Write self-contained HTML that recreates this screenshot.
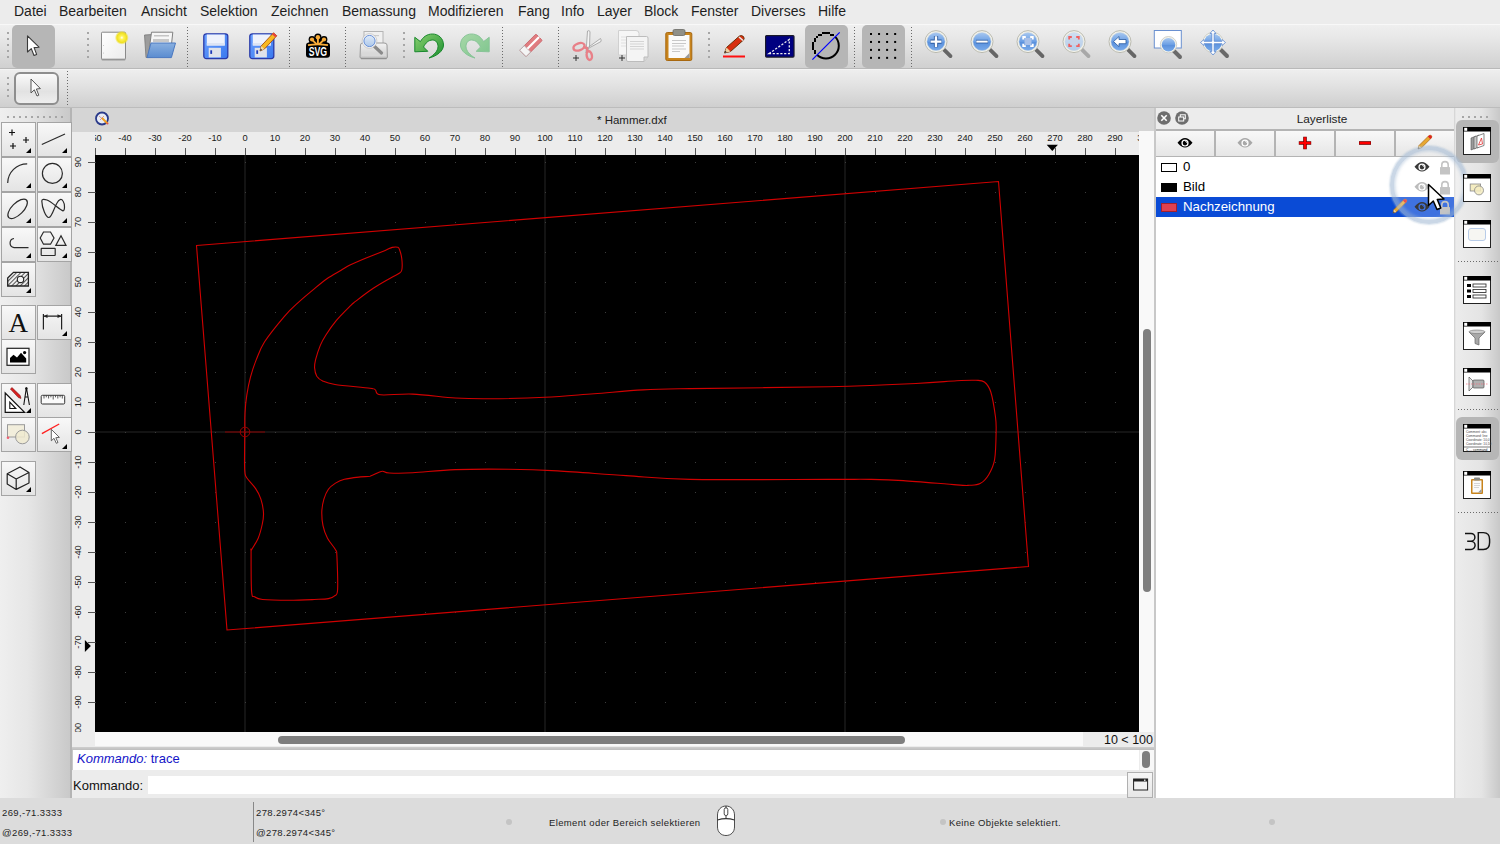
<!DOCTYPE html><html><head><meta charset="utf-8"><style>

*{box-sizing:border-box;margin:0;padding:0}
html,body{width:1500px;height:844px;overflow:hidden;background:#ececec;font-family:"Liberation Sans",sans-serif}
body{position:relative}
.abs{position:absolute}
.menu span{position:absolute;top:3px;font-size:14px;color:#1e1e1e;white-space:nowrap}
.tb{position:absolute}
.hd{position:absolute;width:2px;background:repeating-linear-gradient(#a6a6a6 0 2px,transparent 2px 6px)}
.hh{position:absolute;height:2px;background:repeating-linear-gradient(90deg,#a6a6a6 0 2px,transparent 2px 6px)}
.fd{position:absolute;width:1px;background:repeating-linear-gradient(#6a6a6a 0 1px,transparent 1px 3px)}
.fdh{position:absolute;height:1px;background:repeating-linear-gradient(90deg,#6a6a6a 0 1px,transparent 1px 3px)}
.sel{position:absolute;background:#b6b6b6;border-radius:5px}
.ico{position:absolute;overflow:visible}
.tbtn{position:absolute;border:1px solid #a4a4a4;background:linear-gradient(#f8f8f8,#e4e4e4)}
.rl{position:absolute;font-size:9.3px;font-weight:500;color:#1a1a1a;white-space:nowrap;line-height:12px}
.st{position:absolute;font-size:9.5px;color:#1e1e1e;white-space:nowrap;letter-spacing:0.36px;line-height:12px}

</style></head><body>
<div class="abs menu" style="left:0;top:0;width:1500px;height:24px;background:#ececec">
<span style="left:14px">Datei</span>
<span style="left:59px">Bearbeiten</span>
<span style="left:141px">Ansicht</span>
<span style="left:200px">Selektion</span>
<span style="left:271px">Zeichnen</span>
<span style="left:342px">Bemassung</span>
<span style="left:428px">Modifizieren</span>
<span style="left:518px">Fang</span>
<span style="left:561px">Info</span>
<span style="left:597px">Layer</span>
<span style="left:644px">Block</span>
<span style="left:691px">Fenster</span>
<span style="left:751px">Diverses</span>
<span style="left:818px">Hilfe</span>
</div>
<div class="tb" style="left:0;top:24px;width:1500px;height:45px;background:linear-gradient(#efefef,#e6e6e6 35%,#d0d0d0);border-top:1px solid #f8f8f8;border-bottom:1px solid #b9b9b9"></div>
<div class="tb" style="left:0;top:69px;width:1500px;height:39px;background:linear-gradient(#eeeeee,#e4e4e4 35%,#cfcfcf);border-top:1px solid #f4f4f4;border-bottom:1px solid #bcbcbc"></div>
<div class="hd" style="left:7px;top:32px;height:26px"></div>
<div class="hd" style="left:87px;top:32px;height:26px"></div>
<div class="hd" style="left:403px;top:32px;height:26px"></div>
<div class="hd" style="left:708px;top:32px;height:26px"></div>
<div class="fd" style="left:187px;top:27px;height:40px"></div>
<div class="fd" style="left:289px;top:27px;height:40px"></div>
<div class="fd" style="left:345px;top:27px;height:40px"></div>
<div class="fd" style="left:502px;top:27px;height:40px"></div>
<div class="fd" style="left:558px;top:27px;height:40px"></div>
<div class="fd" style="left:854px;top:27px;height:40px"></div>
<div class="fd" style="left:911px;top:27px;height:40px"></div>
<div class="sel" style="left:12px;top:25px;width:43px;height:43px"></div>
<div class="sel" style="left:805px;top:25px;width:43px;height:43px"></div>
<div class="sel" style="left:862px;top:25px;width:43px;height:43px"></div>
<div class="hd" style="left:7px;top:77px;height:20px"></div>
<div class="tbtn" style="left:14px;top:72px;width:45px;height:33px;border:2px solid #8e8e8e;border-radius:6px;background:linear-gradient(#fafafa,#e2e2e2 60%,#eeeeee)"></div>
<div class="fd" style="left:67px;top:71px;height:35px"></div>
<svg width="0" height="0" style="position:absolute"><defs>
<linearGradient id="gPage" x1="0" y1="0" x2="1" y2="1"><stop offset="0" stop-color="#ffffff"/><stop offset="1" stop-color="#ececec"/></linearGradient>
<radialGradient id="gGlow"><stop offset="0" stop-color="#ffffff"/><stop offset="0.25" stop-color="#fff45a"/><stop offset="0.7" stop-color="#f0e020"/><stop offset="1" stop-color="#f0e020" stop-opacity="0"/></radialGradient>
<linearGradient id="gBlueF" x1="0" y1="0" x2="0" y2="1"><stop offset="0" stop-color="#8ab0e0"/><stop offset="1" stop-color="#5a8cd0"/></linearGradient>
<linearGradient id="gFloppy" x1="0" y1="0" x2="1" y2="1"><stop offset="0" stop-color="#6aa0ff"/><stop offset="1" stop-color="#3a78ee"/></linearGradient>
<linearGradient id="gGreen" x1="0" y1="0" x2="1" y2="1"><stop offset="0" stop-color="#8ad070"/><stop offset="1" stop-color="#1c9030"/></linearGradient>
<linearGradient id="gGreenL" x1="0" y1="0" x2="1" y2="1"><stop offset="0" stop-color="#a8d8a8"/><stop offset="1" stop-color="#7cc48c"/></linearGradient>
<linearGradient id="gMag" x1="0" y1="0" x2="0" y2="1"><stop offset="0" stop-color="#a8c8f0"/><stop offset="0.5" stop-color="#6a9ee4"/><stop offset="0.52" stop-color="#5a90dc"/><stop offset="1" stop-color="#78aaea"/></linearGradient>
<linearGradient id="gMagL" x1="0" y1="0" x2="0" y2="1"><stop offset="0" stop-color="#d0dff2"/><stop offset="1" stop-color="#b4cce8"/></linearGradient>
<linearGradient id="gMagP" x1="0" y1="0" x2="0" y2="1"><stop offset="0" stop-color="#e4eefa"/><stop offset="1" stop-color="#a8c4e8"/></linearGradient>
<linearGradient id="gPrinter" x1="0" y1="0" x2="0" y2="1"><stop offset="0" stop-color="#f4f4f4"/><stop offset="1" stop-color="#c8c8c8"/></linearGradient>
</defs></svg>
<svg class="ico" style="left:27px;top:35px" width="14" height="22" viewBox="0 0 14 22" ><path d="M0.5,0.8 L0.5,17 L4.3,13.6 L7,20.5 L9.6,19.4 L7.1,12.6 L12,12.2 Z" fill="#fff" stroke="#3a3a3a" stroke-width="1.1" stroke-linejoin="round"/></svg>
<svg class="ico" style="left:30px;top:78px" width="12" height="20" viewBox="0 0 12 20" ><path d="M1,1 L1,15 L4.3,11.8 L7,18 L8.8,17.2 L6.4,11 L10.4,10.6 Z" fill="#fafafa" stroke="#555" stroke-width="1" stroke-linejoin="round"/></svg>
<svg class="ico" style="left:100px;top:31px" width="30" height="32" viewBox="0 0 30 32" ><rect x="1.5" y="1.5" width="24" height="28" rx="1" fill="#9a9a9a"/><rect x="1.5" y="1.2" width="24" height="27" rx="1" fill="url(#gPage)" stroke="#8a8a8a" stroke-width="1"/><circle cx="3.5" cy="14.5" r="0.5" fill="#bbb"/><circle cx="3.5" cy="22" r="0.5" fill="#bbb"/><circle cx="21.8" cy="6.7" r="7" fill="url(#gGlow)"/></svg>
<svg class="ico" style="left:143px;top:31px" width="36" height="30" viewBox="0 0 36 30" ><path d="M1.5,4 L9,3.5 L9.5,26 L3,26.5 Z" fill="#9c9c9c" stroke="#777" stroke-width="0.8"/><path d="M8.5,1.2 L29.8,1.2 L28,18 L6,20 Z" fill="#f6f6f6" stroke="#808080" stroke-width="1"/><rect x="11" y="4" width="15" height="1.5" fill="#c4c4c4"/><rect x="10" y="8" width="16" height="3" fill="#c8c8c8"/><path d="M8,12 L32.5,12 L28.4,26.6 L4,26.6 Z" fill="url(#gBlueF)" stroke="#4a78c0" stroke-width="1"/></svg>
<svg class="ico" style="left:203px;top:33px" width="27" height="27" viewBox="0 0 27 27" ><rect x="0.8" y="0.8" width="24" height="24.8" rx="2.5" fill="url(#gFloppy)" stroke="#2a3aa8" stroke-width="1.3"/><rect x="3.8" y="1.5" width="18" height="11" fill="#eef2fc"/><rect x="3.8" y="10" width="18" height="2.5" fill="#dde4f4"/><rect x="5.7" y="14.8" width="12.2" height="9.6" fill="#dfe2ea"/><rect x="7.3" y="17.3" width="1.8" height="3.6" fill="#1e3ab8"/></svg>
<svg class="ico" style="left:249px;top:33px" width="27" height="27" viewBox="0 0 27 27" ><rect x="0.8" y="0.8" width="24" height="24.8" rx="2.5" fill="url(#gFloppy)" stroke="#2a3aa8" stroke-width="1.3"/><rect x="3.8" y="1.5" width="18" height="11" fill="#eef2fc"/><rect x="3.8" y="10" width="18" height="2.5" fill="#dde4f4"/><rect x="5.7" y="14.8" width="12.2" height="9.6" fill="#dfe2ea"/><rect x="7.3" y="17.3" width="1.8" height="3.6" fill="#1e3ab8"/></svg>
<svg class="ico" style="left:258px;top:31px" width="20" height="22" viewBox="0 0 20 22" ><path d="M2,20 L3.2,15 L15.5,1.8 L18.8,4.8 L6.4,18 Z" fill="#f8b820" stroke="#a85010" stroke-width="0.9" stroke-linejoin="round"/><path d="M15.5,1.8 L18.8,4.8 L17.3,6.3 L14,3.3 Z" fill="#e84040"/><path d="M2,20 L3.2,15 L6.4,18 Z" fill="#f0d8a8"/><path d="M2,20 L2.6,17.5 L4.2,19 Z" fill="#333"/></svg>
<svg class="ico" style="left:305px;top:33px" width="26" height="26" viewBox="0 0 26 26" ><rect x="1" y="9.6" width="24" height="15.2" rx="3.2" fill="#000"/><g fill="#000"><circle cx="12.9" cy="4.2" r="3.6"/><circle cx="7" cy="6.5" r="3.4"/><circle cx="19" cy="6.5" r="3.4"/><path d="M3.5,10 L7,6.5 L12.9,4 L19,6.5 L22.5,10 Z"/></g><g fill="#f8ac38"><circle cx="12.9" cy="4.2" r="2.2"/><circle cx="7" cy="6.5" r="2.1"/><circle cx="19" cy="6.5" r="2.1"/></g><path d="M12.9,4.5 L12.9,11.5 M7.2,6.8 L11.5,11.2 M18.8,6.8 L14.3,11.2" stroke="#f8ac38" stroke-width="1.9"/><path d="M3,12.2 Q12.9,10.4 23,12.2" stroke="#f8ac38" stroke-width="1.7" fill="none"/><text x="12.9" y="23.4" text-anchor="middle" font-family="Liberation Sans" font-weight="bold" font-size="12.8" fill="#fff" textLength="18.4" lengthAdjust="spacingAndGlyphs">SVG</text></svg>
<svg class="ico" style="left:359px;top:30px" width="31" height="31" viewBox="0 0 31 31" ><rect x="5" y="1.5" width="19" height="14" fill="#f0f0f0" stroke="#b4b4b4"/><rect x="8" y="5" width="12" height="1.2" fill="#ccc"/><path d="M1.5,15 Q1.5,13 4,13 L25,13 Q28,13 28,15 L28.4,27 Q28.4,28.5 26.5,28.5 L3,28.5 Q1,28.5 1,27 Z" fill="url(#gPrinter)" stroke="#9a9a9a"/><rect x="3" y="23" width="24" height="3" fill="#d8d8d8"/><path d="M2,28.5 L27.5,28.5" stroke="#909090" stroke-width="1.5"/><path d="M15,16 L22.5,23" stroke="#8a8a8a" stroke-width="3.2" stroke-linecap="round"/><circle cx="10.5" cy="11" r="6.4" fill="url(#gMagP)" stroke="#f4f4f4" stroke-width="1.6"/><circle cx="10.5" cy="11" r="5.6" fill="none" stroke="#4a7ad0" stroke-width="0.8"/><circle cx="10.5" cy="11" r="7.4" fill="none" stroke="#b8b8b8" stroke-width="0.6"/></svg>
<svg class="ico" style="left:413px;top:33px" width="32" height="27" viewBox="0 0 32 27" ><path d="M16,25 C24,23 30.5,18 30.5,12 C30.5,5 25,1 19.5,1 C14,1 10,4 7.4,8.6 L1.8,4.3 L1.8,18.8 L14.8,18.3 L10.5,14 C12.5,10 15.5,7 19.5,7 C23,7 25,10 25,13.5 C25,18 21,22 16,25 Z" fill="url(#gGreen)" stroke="#18882c" stroke-width="1" stroke-linejoin="round"/></svg>
<svg class="ico" style="left:459px;top:33px" width="32" height="27" viewBox="0 0 32 27" ><path d="M16,25 C8,23 1.5,18 1.5,12 C1.5,5 7,1 12.5,1 C18,1 22,4 24.6,8.6 L30.2,4.3 L30.2,18.8 L17.2,18.3 L21.5,14 C19.5,10 16.5,7 12.5,7 C9,7 7,10 7,13.5 C7,18 11,22 16,25 Z" fill="url(#gGreenL)" stroke="#88c498" stroke-width="1" stroke-linejoin="round"/></svg>
<svg class="ico" style="left:516px;top:31px" width="30" height="30" viewBox="0 0 30 30" ><ellipse cx="14" cy="26" rx="10" ry="1.6" fill="#d8d8d8"/><g transform="rotate(-45 15 15)"><rect x="4" y="10" width="23" height="9" rx="1" fill="#e07c80" stroke="#c86066" stroke-width="0.8"/><rect x="4" y="10" width="6.5" height="9" fill="#f4f4f4" stroke="#b0b0b0" stroke-width="0.8"/><rect x="10.5" y="13.3" width="16.5" height="2.2" fill="#fff"/></g></svg>
<svg class="ico" style="left:571px;top:29px" width="32" height="33" viewBox="0 0 32 33" ><path d="M15,24 L16.5,2 Q18,1 19,2.5 L18.5,18 Z" fill="#f4f4f4" stroke="#9a9a9a" stroke-width="0.8"/><path d="M15,20 L29.5,9.5 Q30.5,11 30,12.5 L18,19 Z" fill="#f4f4f4" stroke="#9a9a9a" stroke-width="0.8"/><ellipse cx="8" cy="17.8" rx="5.8" ry="3.5" transform="rotate(-20 8 17.8)" fill="none" stroke="#e88088" stroke-width="2.4"/><ellipse cx="18.3" cy="26.6" rx="2.6" ry="4.4" transform="rotate(-10 18.3 26.6)" fill="none" stroke="#e88088" stroke-width="2.4"/><path d="M12,18 L16,19 L16.5,23" fill="none" stroke="#e88088" stroke-width="2.4"/><path d="M2,29 L8,29 M5,26 L5,32" stroke="#333" stroke-width="1"/></svg>
<svg class="ico" style="left:617px;top:29px" width="33" height="34" viewBox="0 0 33 34" ><path d="M1.5,1.5 L19,1.5 Q22,1.5 22,4.5 L22,26 L1.5,26 Z" fill="#f6f6f6" stroke="#d0d0d0"/><g stroke="#e0e0e0" stroke-width="1"><path d="M4,8 L10,8 M4,11 L10,11 M4,14 L10,14 M4,17 L10,17"/></g><path d="M9.5,7.5 L29.5,7.5 Q31,7.5 31,9 L31,28 L27,32.5 L11,32.5 Q9.5,32.5 9.5,31 Z" fill="#f4f4f4" stroke="#bcbcbc"/><path d="M31,28 L27,28 L27,32.5" fill="#d8d8d8" stroke="#bcbcbc"/><g stroke="#d4d4d4" stroke-width="1"><path d="M13,12.5 L27,12.5 M13,15 L27,15 M13,17.5 L27,17.5 M13,20 L27,20"/></g><path d="M2,29 L8,29 M5,26 L5,32" stroke="#333" stroke-width="1"/></svg>
<svg class="ico" style="left:664px;top:28px" width="30" height="35" viewBox="0 0 30 35" ><rect x="1.8" y="4.5" width="26" height="28" rx="1.5" fill="#c8841c" stroke="#a86810"/><rect x="4.5" y="7" width="21" height="23" fill="#fafafa"/><path d="M20.5,30 L25.5,25 L25.5,30 Z" fill="#9a9a9a"/><g stroke="#c8c8c8"><path d="M8,12.5 L22,12.5 M8,15.5 L22,15.5 M8,18 L20,18 M8,21 L22,21 M8,23.5 L16,23.5"/></g><rect x="9" y="1.5" width="12" height="6" rx="1.5" fill="#909088" stroke="#6a6a64" stroke-width="0.8"/></svg>
<svg class="ico" style="left:722px;top:34px" width="26" height="26" viewBox="0 0 26 26" ><path d="M1,22.5 L23,22.5" stroke="#ff1010" stroke-width="2"/><path d="M2.5,19 L4.5,13.5 L17.5,2 Q19.5,0.8 21.5,2.6 Q22.8,4.5 21.5,6 L8.5,17.5 Z" fill="#d83010" stroke="#6a3008" stroke-width="1" stroke-linejoin="round"/><path d="M17,3 L21,6.5" stroke="#e8e8e8" stroke-width="1.6"/><path d="M2.5,19 L4.5,13.5 L8.5,17.5 Z" fill="#f0d0a0"/><path d="M2.5,19 L3.2,16.8 L4.8,18.2 Z" fill="#222"/></svg>
<svg class="ico" style="left:765px;top:35px" width="30" height="23" viewBox="0 0 30 23" ><rect x="0.6" y="0.6" width="28.4" height="21.5" rx="1" fill="#000080" stroke="#1a1a2a" stroke-width="1.2"/><path d="M4,18.6 L24.3,4.5 L24.3,18.6 Z" fill="none" stroke="#f0f0f0" stroke-width="1.3" stroke-dasharray="2.2 1.6"/></svg>
<svg class="ico" style="left:806px;top:28px" width="40" height="36" viewBox="0 0 40 36" ><g fill="#000" shape-rendering="crispEdges"><rect x="16" y="4" width="8" height="2"/><rect x="12" y="6" width="4" height="2"/><rect x="24" y="6" width="4" height="2"/><rect x="10" y="8" width="2" height="2"/><rect x="8" y="10" width="2" height="4"/><rect x="6" y="14" width="2" height="8"/><rect x="8" y="22" width="2" height="4"/></g><path d="M10.95,26.75 A12.8,12.8 0 0 0 29.05,26.75 A12.8,12.8 0 0 0 29.05,8.65" fill="none" stroke="#000" stroke-width="2"/><path d="M6.4,31.6 L33.7,4.3" stroke="#0000ff" stroke-width="1.2"/></svg>
<svg class="ico" style="left:870px;top:33px" width="28" height="28" viewBox="0 0 28 28" ><rect x="0.00" y="0.00" width="2" height="2" fill="#000"/><rect x="0.00" y="7.95" width="2" height="2" fill="#000"/><rect x="0.00" y="15.90" width="2" height="2" fill="#000"/><rect x="0.00" y="23.85" width="2" height="2" fill="#000"/><rect x="8.05" y="0.00" width="2" height="2" fill="#000"/><rect x="8.05" y="7.95" width="2" height="2" fill="#000"/><rect x="8.05" y="15.90" width="2" height="2" fill="#000"/><rect x="8.05" y="23.85" width="2" height="2" fill="#000"/><rect x="16.10" y="0.00" width="2" height="2" fill="#000"/><rect x="16.10" y="7.95" width="2" height="2" fill="#000"/><rect x="16.10" y="15.90" width="2" height="2" fill="#000"/><rect x="16.10" y="23.85" width="2" height="2" fill="#000"/><rect x="24.15" y="0.00" width="2" height="2" fill="#000"/><rect x="24.15" y="7.95" width="2" height="2" fill="#000"/><rect x="24.15" y="15.90" width="2" height="2" fill="#000"/><rect x="24.15" y="23.85" width="2" height="2" fill="#000"/></svg>
<svg class="ico" style="left:923px;top:28px" width="32" height="34" viewBox="0 0 32 34" ><path d="M21,21.6 L27.5,28.1" stroke="#666" stroke-width="3.8" stroke-linecap="round"/><circle cx="13" cy="13.6" r="11" fill="#f2f2ea" stroke="#b4b4aa" stroke-width="0.9"/><circle cx="13" cy="13.6" r="9.1" fill="url(#gMag)" stroke="#c8d4e0" stroke-width="0.5"/><path d="M13,8 L13,19.2 M7.4,13.6 L18.6,13.6" stroke="#2a5aa0" stroke-width="4.2"/><path d="M13,8.2 L13,19 M7.6,13.6 L18.4,13.6" stroke="#fff" stroke-width="2.4"/></svg>
<svg class="ico" style="left:969px;top:28px" width="32" height="34" viewBox="0 0 32 34" ><path d="M21,21.6 L27.5,28.1" stroke="#666" stroke-width="3.8" stroke-linecap="round"/><circle cx="13" cy="13.6" r="11" fill="#f2f2ea" stroke="#b4b4aa" stroke-width="0.9"/><circle cx="13" cy="13.6" r="9.1" fill="url(#gMag)" stroke="#c8d4e0" stroke-width="0.5"/><path d="M7,13.6 L19,13.6" stroke="#2a5aa0" stroke-width="3.6"/><path d="M7.3,13.6 L18.7,13.6" stroke="#fff" stroke-width="2"/></svg>
<svg class="ico" style="left:1015px;top:28px" width="32" height="34" viewBox="0 0 32 34" ><path d="M21,21.6 L27.5,28.1" stroke="#666" stroke-width="3.8" stroke-linecap="round"/><circle cx="13" cy="13.6" r="11" fill="#f2f2ea" stroke="#b4b4aa" stroke-width="0.9"/><circle cx="13" cy="13.6" r="9.1" fill="url(#gMag)" stroke="#c8d4e0" stroke-width="0.5"/><rect x="9.5" y="10" width="7" height="7" fill="#a8c0e8"/><path d="M8.2,11.5 L8.2,9 L10.8,9 M15.2,9 L17.8,9 L17.8,11.5 M17.8,15.7 L17.8,18.2 L15.2,18.2 M10.8,18.2 L8.2,18.2 L8.2,15.7" fill="none" stroke="#fff" stroke-width="1.8"/></svg>
<svg class="ico" style="left:1061px;top:28px" width="32" height="34" viewBox="0 0 32 34" ><path d="M21,21.6 L27.5,28.1" stroke="#a8a8a8" stroke-width="3.8" stroke-linecap="round"/><circle cx="13" cy="13.6" r="11" fill="#f2f2ea" stroke="#b4b4aa" stroke-width="0.9"/><circle cx="13" cy="13.6" r="9.1" fill="url(#gMagL)" stroke="#c8d4e0" stroke-width="0.5"/><rect x="9.5" y="10" width="7" height="7" fill="#c8d4e8"/><path d="M8.2,11.5 L8.2,9 L10.8,9 M15.2,9 L17.8,9 L17.8,11.5 M17.8,15.7 L17.8,18.2 L15.2,18.2 M10.8,18.2 L8.2,18.2 L8.2,15.7" fill="none" stroke="#f06060" stroke-width="1.8"/></svg>
<svg class="ico" style="left:1107px;top:28px" width="32" height="34" viewBox="0 0 32 34" ><path d="M21,21.6 L27.5,28.1" stroke="#666" stroke-width="3.8" stroke-linecap="round"/><circle cx="13" cy="13.6" r="11" fill="#f2f2ea" stroke="#b4b4aa" stroke-width="0.9"/><circle cx="13" cy="13.6" r="9.1" fill="url(#gMag)" stroke="#c8d4e0" stroke-width="0.5"/><path d="M6.5,13.6 L12,8.5 L12,11.5 L19,11.5 L19,15.7 L12,15.7 L12,18.7 Z" fill="#fff" stroke="#2a5aa0" stroke-width="0.8"/></svg>
<svg class="ico" style="left:1153px;top:30px" width="32" height="32" viewBox="0 0 32 32" ><rect x="1.3" y="0.5" width="27" height="17.5" fill="#fff" stroke="#6a90d0" stroke-width="1"/><path d="M21,21 L27,27" stroke="#6a6a6a" stroke-width="4" stroke-linecap="round"/><circle cx="15.5" cy="14.7" r="8.2" fill="#f4f4ec" stroke="#c8c8c0" stroke-width="0.8"/><circle cx="15.5" cy="14.7" r="6.8" fill="url(#gMag)"/></svg>
<svg class="ico" style="left:1199px;top:28px" width="34" height="34" viewBox="0 0 34 34" ><path d="M22,22 L28,28" stroke="#6a6a6a" stroke-width="4" stroke-linecap="round"/><circle cx="14" cy="14.5" r="10.2" fill="#f4f4ec" stroke="#c8c8c0" stroke-width="0.8"/><circle cx="14" cy="14.5" r="8.8" fill="url(#gMag)"/><path d="M14,2 L17,5.5 L15.2,5.5 L15.2,13.3 L23,13.3 L23,11.5 L26.5,14.5 L23,17.5 L23,15.7 L15.2,15.7 L15.2,23.5 L17,23.5 L14,27 L11,23.5 L12.8,23.5 L12.8,15.7 L5,15.7 L5,17.5 L1.5,14.5 L5,11.5 L5,13.3 L12.8,13.3 L12.8,5.5 L11,5.5 Z" fill="#fff" stroke="#5a88d0" stroke-width="0.8"/></svg>
<div class="abs" style="left:0;top:108px;width:70px;height:690px;background:linear-gradient(90deg,#efefef,#e6e6e6 40%,#c9c9c9)"></div>
<div class="abs" style="left:70px;top:108px;width:2px;height:690px;background:#b4b4b4"></div>
<div class="hh" style="left:7px;top:116px;width:57px"></div>
<div class="tbtn" style="left:1px;top:122px;width:35px;height:35px"></div>
<div class="tbtn" style="left:37px;top:122px;width:35px;height:35px"></div>
<div class="tbtn" style="left:1px;top:157px;width:35px;height:35px"></div>
<div class="tbtn" style="left:37px;top:157px;width:35px;height:35px"></div>
<div class="tbtn" style="left:1px;top:192px;width:35px;height:35px"></div>
<div class="tbtn" style="left:37px;top:192px;width:35px;height:35px"></div>
<div class="tbtn" style="left:1px;top:227px;width:35px;height:35px"></div>
<div class="tbtn" style="left:37px;top:227px;width:35px;height:35px"></div>
<div class="tbtn" style="left:1px;top:262px;width:35px;height:35px"></div>
<div class="tbtn" style="left:1px;top:305px;width:35px;height:35px"></div>
<div class="tbtn" style="left:37px;top:305px;width:35px;height:35px"></div>
<div class="tbtn" style="left:1px;top:339px;width:35px;height:35px"></div>
<div class="tbtn" style="left:1px;top:383px;width:35px;height:35px"></div>
<div class="tbtn" style="left:37px;top:383px;width:35px;height:35px"></div>
<div class="tbtn" style="left:1px;top:417px;width:35px;height:35px"></div>
<div class="tbtn" style="left:37px;top:417px;width:35px;height:35px"></div>
<div class="tbtn" style="left:1px;top:461px;width:35px;height:35px"></div>
<div class="abs" style="left:72px;top:108px;width:1082px;height:24px;background:#d5d5d5"></div>
<div class="abs" style="left:597px;top:113px;font-size:11.5px;color:#222;line-height:14px;white-space:nowrap">* Hammer.dxf</div>
<div class="abs" style="left:72px;top:132px;width:1082px;height:23px;background:#ececec"></div>
<div class="abs" style="left:72px;top:155px;width:23px;height:591px;background:#ececec"></div>
<div class="abs" style="left:95px;top:155px;width:1044px;height:577px;background:#000"></div>
<div class="abs" style="left:95px;top:732px;width:988px;height:14px;background:#f9f9f9"></div>
<div class="abs" style="left:278px;top:736px;width:627px;height:8px;background:#7e7e7e;border-radius:4px"></div>
<div class="abs" style="left:1083px;top:732px;width:71px;height:14px;background:#ececec"></div>
<div class="abs" style="left:1083px;top:733px;width:70px;text-align:right;font-size:12.5px;color:#111;line-height:14px">10 &lt; 100</div>
<div class="abs" style="left:1139px;top:131px;width:15px;height:601px;background:#f9f9f9"></div>
<div class="abs" style="left:1143px;top:329px;width:8px;height:263px;background:#7e7e7e;border-radius:4px"></div>
<div class="abs" style="left:72px;top:747px;width:1082px;height:3px;background:linear-gradient(#cfcfcf,#bdbdbd)"></div>
<div class="abs" style="left:72px;top:750px;width:1082px;height:21px;background:#fff;border-left:1px solid #c8c8c8;border-bottom:1px solid #c0c0c0"></div>
<div class="abs" style="left:77px;top:751px;font-size:13px;color:#1414c8;line-height:15px;white-space:nowrap"><i>Kommando:</i> trace</div>
<div class="abs" style="left:1139px;top:750px;width:15px;height:20px;background:#f8f8f8;border-left:1px solid #ececec"></div>
<div class="abs" style="left:1142px;top:751px;width:8px;height:17px;background:#7e7e7e;border-radius:4px"></div>
<div class="abs" style="left:72px;top:770px;width:1082px;height:28px;background:#ececec"></div>
<div class="abs" style="left:73px;top:778px;font-size:13px;color:#111;line-height:15px">Kommando:</div>
<div class="abs" style="left:148px;top:776px;width:979px;height:18px;background:#fff"></div>
<div class="tbtn" style="left:1127px;top:772px;width:26px;height:26px;border-color:#b0b0b0;background:linear-gradient(#f6f6f6,#e6e6e6)"></div>
<svg class="ico" style="left:95px;top:155px" width="1044" height="577" viewBox="0 0 1044 577" ><defs><pattern id="gd" x="0" y="7" width="30" height="30" patternUnits="userSpaceOnUse"><rect x="0" y="0" width="1" height="1" fill="#3c3c3c"/></pattern></defs><rect x="149" y="0" width="2" height="577" fill="#131313"/><rect x="449" y="0" width="2" height="577" fill="#131313"/><rect x="749" y="0" width="2" height="577" fill="#131313"/><rect x="0" y="276" width="1044" height="2" fill="#131313"/><rect x="0" y="0" width="1044" height="577" fill="url(#gd)"/><polygon points="101.5,90.5 903.5,26.5 933.5,411.5 132.0,475.0" fill="none" stroke="#d00000" stroke-width="1.1"/><path d="M149.8,273.3 C149.8,270.8 149.7,263.5 150.0,258.0 C150.3,252.5 150.9,246.1 151.8,240.2 C152.7,234.3 153.8,228.3 155.4,222.4 C157.0,216.5 158.9,210.5 161.3,204.6 C163.7,198.7 165.0,194.0 169.6,186.8 C174.3,179.6 183.6,168.2 189.2,161.6 C194.8,155.0 198.6,151.8 203.4,147.4 C208.1,143.0 212.9,139.1 217.7,135.1 C222.4,131.2 227.2,127.0 231.9,123.7 C236.6,120.4 242.3,117.5 246.1,115.2 C250.0,112.9 250.6,112.1 255.0,110.0 C259.4,107.9 266.5,104.9 272.4,102.5 C278.3,100.1 286.0,97.1 290.2,95.4 C294.4,93.7 295.2,92.9 297.3,92.4 C299.4,91.9 301.4,91.9 302.6,92.2 C303.8,92.5 303.7,92.3 304.4,94.2 C305.1,96.1 306.4,100.2 306.8,103.7 C307.2,107.2 307.3,112.5 306.8,115.0 C306.3,117.5 305.6,117.2 303.8,118.5 C302.0,119.8 300.4,120.2 296.1,122.7 C291.9,125.2 284.2,129.4 278.3,133.3 C272.4,137.2 264.4,143.4 260.5,146.4 C256.6,149.4 258.2,148.0 255.0,151.2 C251.8,154.4 245.4,160.6 241.4,165.4 C237.4,170.2 233.6,175.8 230.9,180.0 C228.2,184.2 227.0,186.3 225.3,190.4 C223.6,194.5 221.6,200.9 220.6,204.6 C219.7,208.4 219.4,210.1 219.6,212.9 C219.8,215.7 220.5,219.0 221.8,221.2 C223.2,223.4 224.7,224.6 227.7,226.0 C230.7,227.4 232.1,228.3 240.0,229.5 C247.9,230.7 268.3,232.3 275.0,233.2 C281.7,234.1 278.5,233.8 280.3,234.9 C282.1,236.0 279.5,239.1 285.7,239.8 C291.9,240.5 305.3,238.6 317.7,239.1 C330.1,239.6 347.9,242.2 360.3,243.0 C372.7,243.8 377.4,243.9 392.3,243.8 C407.2,243.7 432.2,243.2 450.0,242.3 C467.8,241.5 482.7,239.9 499.0,238.7 C515.3,237.5 532.0,235.7 548.0,234.9 C564.0,234.0 564.0,234.1 595.0,233.6 C626.0,233.1 696.0,232.5 733.7,231.7 C771.4,230.8 799.7,229.5 821.0,228.5 C842.3,227.5 851.7,226.2 861.7,225.7 C871.7,225.2 876.3,225.1 880.9,225.3 C885.5,225.5 886.9,225.1 889.4,227.0 C891.9,228.9 893.9,231.2 895.8,237.0 C897.6,242.8 899.6,255.3 900.5,262.0 C901.4,268.7 901.2,269.9 901.1,277.0 C901.0,284.1 900.8,297.6 899.6,304.7 C898.4,311.8 896.1,315.7 893.7,319.7 C891.3,323.7 888.3,326.8 885.1,328.6 C881.9,330.4 878.4,330.1 874.5,330.3 C870.6,330.5 872.7,330.7 861.7,329.9 C850.7,329.1 822.5,326.5 808.3,325.6 C794.1,324.7 788.7,324.6 776.3,324.4 C763.9,324.2 763.9,324.4 733.7,324.4 C703.5,324.4 628.8,325.0 595.0,324.4 C561.2,323.8 553.0,322.0 531.0,320.6 C508.9,319.2 482.3,317.0 462.7,315.9 C443.2,314.8 430.8,314.4 413.7,314.2 C396.6,314.0 376.3,314.0 360.3,314.6 C344.3,315.2 328.7,317.2 317.7,317.8 C306.7,318.4 299.2,318.2 294.2,318.0 C289.2,317.8 289.6,316.4 287.8,316.3 C286.0,316.2 285.6,316.6 283.5,317.4 C281.4,318.2 278.0,320.4 275.0,321.2 C272.0,321.9 269.7,321.4 265.4,321.9 C261.1,322.4 253.5,323.2 249.4,324.2 C245.2,325.2 243.2,326.4 240.5,328.1 C237.8,329.8 235.3,331.6 233.4,334.3 C231.5,337.0 230.0,340.4 228.9,344.1 C227.8,347.8 227.0,352.1 226.8,356.5 C226.7,360.9 227.1,366.3 228.0,370.7 C228.9,375.2 230.4,379.2 232.5,383.2 C234.6,387.2 238.9,391.8 240.5,394.7 C242.1,397.7 241.5,394.2 241.9,400.9 C242.2,407.6 243.0,428.0 242.6,434.7 C242.2,441.4 241.1,439.4 239.6,440.9 C238.1,442.4 236.8,443.0 233.4,443.6 C230.0,444.2 225.7,444.2 219.2,444.5 C212.7,444.8 202.9,445.3 194.3,445.3 C185.7,445.3 173.4,445.1 167.6,444.5 C161.8,443.9 161.5,443.1 159.7,441.8 C157.9,440.5 157.2,443.9 156.6,436.5 C156.0,429.1 156.1,404.4 156.1,397.4 C156.1,390.4 155.4,397.1 156.6,394.7 C157.8,392.3 161.4,387.5 163.2,383.2 C165.0,378.9 166.4,373.2 167.3,369.0 C168.2,364.8 168.7,362.4 168.5,358.3 C168.3,354.1 167.2,348.2 165.9,344.1 C164.6,340.0 162.9,336.9 160.5,333.4 C158.1,329.8 153.5,325.5 151.7,322.8 C149.9,320.1 150.3,320.4 149.9,317.4 C149.5,314.4 149.5,312.4 149.5,305.0 C149.5,297.6 149.8,278.6 149.8,273.3" fill="none" stroke="#d00000" stroke-width="1.1"/><line x1="130" y1="277" x2="170" y2="277" stroke="#8a0000" stroke-width="1.2"/><circle cx="150" cy="277" r="4.8" fill="none" stroke="#9a0000" stroke-width="1"/></svg>
<div class="abs" style="left:95px;top:132px;width:1044px;height:23px;overflow:hidden">
<div class="abs" style="left:0px;top:16px;width:1px;height:7px;background:#555"></div>
<div class="rl" style="left:-30px;top:0px;width:60px;text-align:center">-50</div>
<div class="abs" style="left:30px;top:16px;width:1px;height:7px;background:#555"></div>
<div class="rl" style="left:0px;top:0px;width:60px;text-align:center">-40</div>
<div class="abs" style="left:60px;top:16px;width:1px;height:7px;background:#555"></div>
<div class="rl" style="left:30px;top:0px;width:60px;text-align:center">-30</div>
<div class="abs" style="left:90px;top:16px;width:1px;height:7px;background:#555"></div>
<div class="rl" style="left:60px;top:0px;width:60px;text-align:center">-20</div>
<div class="abs" style="left:120px;top:16px;width:1px;height:7px;background:#555"></div>
<div class="rl" style="left:90px;top:0px;width:60px;text-align:center">-10</div>
<div class="abs" style="left:150px;top:16px;width:1px;height:7px;background:#555"></div>
<div class="rl" style="left:120px;top:0px;width:60px;text-align:center">0</div>
<div class="abs" style="left:180px;top:16px;width:1px;height:7px;background:#555"></div>
<div class="rl" style="left:150px;top:0px;width:60px;text-align:center">10</div>
<div class="abs" style="left:210px;top:16px;width:1px;height:7px;background:#555"></div>
<div class="rl" style="left:180px;top:0px;width:60px;text-align:center">20</div>
<div class="abs" style="left:240px;top:16px;width:1px;height:7px;background:#555"></div>
<div class="rl" style="left:210px;top:0px;width:60px;text-align:center">30</div>
<div class="abs" style="left:270px;top:16px;width:1px;height:7px;background:#555"></div>
<div class="rl" style="left:240px;top:0px;width:60px;text-align:center">40</div>
<div class="abs" style="left:300px;top:16px;width:1px;height:7px;background:#555"></div>
<div class="rl" style="left:270px;top:0px;width:60px;text-align:center">50</div>
<div class="abs" style="left:330px;top:16px;width:1px;height:7px;background:#555"></div>
<div class="rl" style="left:300px;top:0px;width:60px;text-align:center">60</div>
<div class="abs" style="left:360px;top:16px;width:1px;height:7px;background:#555"></div>
<div class="rl" style="left:330px;top:0px;width:60px;text-align:center">70</div>
<div class="abs" style="left:390px;top:16px;width:1px;height:7px;background:#555"></div>
<div class="rl" style="left:360px;top:0px;width:60px;text-align:center">80</div>
<div class="abs" style="left:420px;top:16px;width:1px;height:7px;background:#555"></div>
<div class="rl" style="left:390px;top:0px;width:60px;text-align:center">90</div>
<div class="abs" style="left:450px;top:16px;width:1px;height:7px;background:#555"></div>
<div class="rl" style="left:420px;top:0px;width:60px;text-align:center">100</div>
<div class="abs" style="left:480px;top:16px;width:1px;height:7px;background:#555"></div>
<div class="rl" style="left:450px;top:0px;width:60px;text-align:center">110</div>
<div class="abs" style="left:510px;top:16px;width:1px;height:7px;background:#555"></div>
<div class="rl" style="left:480px;top:0px;width:60px;text-align:center">120</div>
<div class="abs" style="left:540px;top:16px;width:1px;height:7px;background:#555"></div>
<div class="rl" style="left:510px;top:0px;width:60px;text-align:center">130</div>
<div class="abs" style="left:570px;top:16px;width:1px;height:7px;background:#555"></div>
<div class="rl" style="left:540px;top:0px;width:60px;text-align:center">140</div>
<div class="abs" style="left:600px;top:16px;width:1px;height:7px;background:#555"></div>
<div class="rl" style="left:570px;top:0px;width:60px;text-align:center">150</div>
<div class="abs" style="left:630px;top:16px;width:1px;height:7px;background:#555"></div>
<div class="rl" style="left:600px;top:0px;width:60px;text-align:center">160</div>
<div class="abs" style="left:660px;top:16px;width:1px;height:7px;background:#555"></div>
<div class="rl" style="left:630px;top:0px;width:60px;text-align:center">170</div>
<div class="abs" style="left:690px;top:16px;width:1px;height:7px;background:#555"></div>
<div class="rl" style="left:660px;top:0px;width:60px;text-align:center">180</div>
<div class="abs" style="left:720px;top:16px;width:1px;height:7px;background:#555"></div>
<div class="rl" style="left:690px;top:0px;width:60px;text-align:center">190</div>
<div class="abs" style="left:750px;top:16px;width:1px;height:7px;background:#555"></div>
<div class="rl" style="left:720px;top:0px;width:60px;text-align:center">200</div>
<div class="abs" style="left:780px;top:16px;width:1px;height:7px;background:#555"></div>
<div class="rl" style="left:750px;top:0px;width:60px;text-align:center">210</div>
<div class="abs" style="left:810px;top:16px;width:1px;height:7px;background:#555"></div>
<div class="rl" style="left:780px;top:0px;width:60px;text-align:center">220</div>
<div class="abs" style="left:840px;top:16px;width:1px;height:7px;background:#555"></div>
<div class="rl" style="left:810px;top:0px;width:60px;text-align:center">230</div>
<div class="abs" style="left:870px;top:16px;width:1px;height:7px;background:#555"></div>
<div class="rl" style="left:840px;top:0px;width:60px;text-align:center">240</div>
<div class="abs" style="left:900px;top:16px;width:1px;height:7px;background:#555"></div>
<div class="rl" style="left:870px;top:0px;width:60px;text-align:center">250</div>
<div class="abs" style="left:930px;top:16px;width:1px;height:7px;background:#555"></div>
<div class="rl" style="left:900px;top:0px;width:60px;text-align:center">260</div>
<div class="abs" style="left:960px;top:16px;width:1px;height:7px;background:#555"></div>
<div class="rl" style="left:930px;top:0px;width:60px;text-align:center">270</div>
<div class="abs" style="left:990px;top:16px;width:1px;height:7px;background:#555"></div>
<div class="rl" style="left:960px;top:0px;width:60px;text-align:center">280</div>
<div class="abs" style="left:1020px;top:16px;width:1px;height:7px;background:#555"></div>
<div class="rl" style="left:990px;top:0px;width:60px;text-align:center">290</div>
<div class="rl" style="left:1020px;top:0px;width:60px;text-align:center">300</div>
</div>
<div class="abs" style="left:0;top:0;width:1500px;height:732px;overflow:hidden">
<div class="abs" style="left:88px;top:732px;width:7px;height:1px;background:#555"></div>
<div class="rl" style="left:48px;top:726px;width:60px;text-align:center;transform:rotate(-90deg)">-100</div>
<div class="abs" style="left:88px;top:702px;width:7px;height:1px;background:#555"></div>
<div class="rl" style="left:48px;top:696px;width:60px;text-align:center;transform:rotate(-90deg)">-90</div>
<div class="abs" style="left:88px;top:672px;width:7px;height:1px;background:#555"></div>
<div class="rl" style="left:48px;top:666px;width:60px;text-align:center;transform:rotate(-90deg)">-80</div>
<div class="abs" style="left:88px;top:642px;width:7px;height:1px;background:#555"></div>
<div class="rl" style="left:48px;top:636px;width:60px;text-align:center;transform:rotate(-90deg)">-70</div>
<div class="abs" style="left:88px;top:612px;width:7px;height:1px;background:#555"></div>
<div class="rl" style="left:48px;top:606px;width:60px;text-align:center;transform:rotate(-90deg)">-60</div>
<div class="abs" style="left:88px;top:582px;width:7px;height:1px;background:#555"></div>
<div class="rl" style="left:48px;top:576px;width:60px;text-align:center;transform:rotate(-90deg)">-50</div>
<div class="abs" style="left:88px;top:552px;width:7px;height:1px;background:#555"></div>
<div class="rl" style="left:48px;top:546px;width:60px;text-align:center;transform:rotate(-90deg)">-40</div>
<div class="abs" style="left:88px;top:522px;width:7px;height:1px;background:#555"></div>
<div class="rl" style="left:48px;top:516px;width:60px;text-align:center;transform:rotate(-90deg)">-30</div>
<div class="abs" style="left:88px;top:492px;width:7px;height:1px;background:#555"></div>
<div class="rl" style="left:48px;top:486px;width:60px;text-align:center;transform:rotate(-90deg)">-20</div>
<div class="abs" style="left:88px;top:462px;width:7px;height:1px;background:#555"></div>
<div class="rl" style="left:48px;top:456px;width:60px;text-align:center;transform:rotate(-90deg)">-10</div>
<div class="abs" style="left:88px;top:432px;width:7px;height:1px;background:#555"></div>
<div class="rl" style="left:48px;top:426px;width:60px;text-align:center;transform:rotate(-90deg)">0</div>
<div class="abs" style="left:88px;top:402px;width:7px;height:1px;background:#555"></div>
<div class="rl" style="left:48px;top:396px;width:60px;text-align:center;transform:rotate(-90deg)">10</div>
<div class="abs" style="left:88px;top:372px;width:7px;height:1px;background:#555"></div>
<div class="rl" style="left:48px;top:366px;width:60px;text-align:center;transform:rotate(-90deg)">20</div>
<div class="abs" style="left:88px;top:342px;width:7px;height:1px;background:#555"></div>
<div class="rl" style="left:48px;top:336px;width:60px;text-align:center;transform:rotate(-90deg)">30</div>
<div class="abs" style="left:88px;top:312px;width:7px;height:1px;background:#555"></div>
<div class="rl" style="left:48px;top:306px;width:60px;text-align:center;transform:rotate(-90deg)">40</div>
<div class="abs" style="left:88px;top:282px;width:7px;height:1px;background:#555"></div>
<div class="rl" style="left:48px;top:276px;width:60px;text-align:center;transform:rotate(-90deg)">50</div>
<div class="abs" style="left:88px;top:252px;width:7px;height:1px;background:#555"></div>
<div class="rl" style="left:48px;top:246px;width:60px;text-align:center;transform:rotate(-90deg)">60</div>
<div class="abs" style="left:88px;top:222px;width:7px;height:1px;background:#555"></div>
<div class="rl" style="left:48px;top:216px;width:60px;text-align:center;transform:rotate(-90deg)">70</div>
<div class="abs" style="left:88px;top:192px;width:7px;height:1px;background:#555"></div>
<div class="rl" style="left:48px;top:186px;width:60px;text-align:center;transform:rotate(-90deg)">80</div>
<div class="abs" style="left:88px;top:162px;width:7px;height:1px;background:#555"></div>
<div class="rl" style="left:48px;top:156px;width:60px;text-align:center;transform:rotate(-90deg)">90</div>
</div>
<svg class="ico" style="left:1046px;top:144px" width="13" height="8" viewBox="0 0 13 8" ><path d="M0.7,0.8 L11.9,0.8 L6.3,7 Z" fill="#000"/></svg>
<svg class="ico" style="left:84px;top:639px" width="8" height="14" viewBox="0 0 8 14" ><path d="M0.9,1 L6.9,7 L0.9,13 Z" fill="#000"/></svg>
<div class="abs" style="left:72px;top:132px;width:23px;height:23px;background:#ececec"></div>
<div class="abs" style="left:1154px;top:108px;width:2px;height:690px;background:#c8c8c8"></div>
<div class="abs" style="left:1156px;top:108px;width:298px;height:22px;background:#ececec"></div>
<div class="abs" style="left:1156px;top:112px;width:332px;text-align:center;font-size:11.8px;color:#222;line-height:14px">Layerliste</div>
<div class="abs" style="left:1156px;top:129px;width:298px;height:28px;background:#b4b4b4"></div>
<div class="abs" style="left:1156px;top:131px;width:58px;height:25px;background:linear-gradient(#f8f8f8,#e6e6e6)"></div>
<div class="abs" style="left:1216px;top:131px;width:58px;height:25px;background:linear-gradient(#f8f8f8,#e6e6e6)"></div>
<div class="abs" style="left:1276px;top:131px;width:58px;height:25px;background:linear-gradient(#f8f8f8,#e6e6e6)"></div>
<div class="abs" style="left:1336px;top:131px;width:58px;height:25px;background:linear-gradient(#f8f8f8,#e6e6e6)"></div>
<div class="abs" style="left:1396px;top:131px;width:58px;height:25px;background:linear-gradient(#f8f8f8,#e6e6e6)"></div>
<div class="abs" style="left:1156px;top:157px;width:298px;height:641px;background:#fff"></div>
<div class="abs" style="left:1156px;top:197px;width:298px;height:20px;background:#0a4bd6"></div>
<div class="abs" style="left:1161px;top:163px;width:16px;height:9px;background:#fff;border:1px solid #000"></div>
<div class="abs" style="left:1183px;top:159px;font-size:13.3px;color:#000;line-height:16px">0</div>
<div class="abs" style="left:1161px;top:183px;width:16px;height:9px;background:#000;border:1px solid #000"></div>
<div class="abs" style="left:1183px;top:179px;font-size:13.3px;color:#000;line-height:16px">Bild</div>
<div class="abs" style="left:1161px;top:203px;width:16px;height:9px;background:#e04050;border:1px solid #a02030"></div>
<div class="abs" style="left:1183px;top:199px;font-size:13.3px;color:#fff;line-height:16px">Nachzeichnung</div>
<div class="abs" style="left:1454px;top:108px;width:46px;height:690px;background:linear-gradient(90deg,#d0d0d0 0,#ececec 2px,#e4e4e4 60%,#c8c8c8)"></div>
<div class="sel" style="left:1456px;top:120px;width:43px;height:43px;border-radius:6px"></div>
<div class="sel" style="left:1456px;top:417px;width:43px;height:43px;border-radius:6px"></div>
<div class="hh" style="left:1462px;top:116px;width:26px"></div>
<div class="fdh" style="left:1458px;top:261px;width:40px"></div>
<div class="fdh" style="left:1458px;top:409px;width:40px"></div>
<div class="fdh" style="left:1458px;top:512px;width:40px"></div>
<div class="abs" style="left:0;top:798px;width:1500px;height:46px;background:#dcdcdc"></div>
<div class="st" style="left:2px;top:806.7px">269,-71.3333</div>
<div class="st" style="left:2px;top:827.3px">@269,-71.3333</div>
<div class="abs" style="left:253px;top:802px;width:1px;height:40px;background:#888"></div>
<div class="st" style="left:256px;top:806.7px">278.2974&lt;345°</div>
<div class="st" style="left:256px;top:827.3px">@278.2974&lt;345°</div>
<div class="abs" style="left:506px;top:819px;width:6px;height:6px;border-radius:3px;background:#c4c4c4"></div>
<div class="abs" style="left:940px;top:819px;width:6px;height:6px;border-radius:3px;background:#c4c4c4"></div>
<div class="abs" style="left:1269px;top:819px;width:6px;height:6px;border-radius:3px;background:#c4c4c4"></div>
<div class="st" style="left:549px;top:816.8px">Element oder Bereich selektieren</div>
<div class="st" style="left:949px;top:816.8px">Keine Objekte selektiert.</div>
<svg class="ico" style="left:1px;top:122px" width="35" height="35" viewBox="0 0 35 35" ><path d="M8,10.5 L14,10.5 M11,7.5 L11,13.5 M22,18 L28,18 M25,15 L25,21 M9,24 L15,24 M12,21 L12,27" stroke="#111" stroke-width="1.2"/></svg>
<svg class="ico" style="left:26px;top:148px" width="6" height="6" viewBox="0 0 6 6" ><path d="M5,0 L5,5 L0,5 Z" fill="#000"/></svg>
<svg class="ico" style="left:36px;top:122px" width="35" height="35" viewBox="0 0 35 35" ><path d="M5.8,22.5 L29,12" stroke="#2a2a2a" fill="none" stroke-width="1.2"/></svg>
<svg class="ico" style="left:62px;top:148px" width="6" height="6" viewBox="0 0 6 6" ><path d="M5,0 L5,5 L0,5 Z" fill="#000"/></svg>
<svg class="ico" style="left:1px;top:157px" width="35" height="35" viewBox="0 0 35 35" ><path d="M6.7,26 A19.5,19.5 0 0 1 26.2,6.8" stroke="#2a2a2a" fill="none" stroke-width="1.2"/></svg>
<svg class="ico" style="left:26px;top:183px" width="6" height="6" viewBox="0 0 6 6" ><path d="M5,0 L5,5 L0,5 Z" fill="#000"/></svg>
<svg class="ico" style="left:36px;top:157px" width="35" height="35" viewBox="0 0 35 35" ><circle cx="16.4" cy="16.4" r="10" stroke="#2a2a2a" fill="none" stroke-width="1.2"/></svg>
<svg class="ico" style="left:62px;top:183px" width="6" height="6" viewBox="0 0 6 6" ><path d="M5,0 L5,5 L0,5 Z" fill="#000"/></svg>
<svg class="ico" style="left:1px;top:192px" width="35" height="35" viewBox="0 0 35 35" ><ellipse cx="16.6" cy="16.8" rx="12.5" ry="5.8" transform="rotate(-45 16.6 16.8)" stroke="#2a2a2a" fill="none" stroke-width="1.2"/></svg>
<svg class="ico" style="left:26px;top:218px" width="6" height="6" viewBox="0 0 6 6" ><path d="M5,0 L5,5 L0,5 Z" fill="#000"/></svg>
<svg class="ico" style="left:36px;top:192px" width="35" height="35" viewBox="0 0 35 35" ><path d="M5.8,9 C6,16 10,26 13,25.5 C16,25 18,16 21,11 C23,7 25.5,6.5 27,9 C29,12 29,19 27,18.8 C24,18 16,10 11,8 C8,7 5.8,7 5.8,9 Z" stroke="#2a2a2a" fill="none" stroke-width="1.2"/></svg>
<svg class="ico" style="left:62px;top:218px" width="6" height="6" viewBox="0 0 6 6" ><path d="M5,0 L5,5 L0,5 Z" fill="#000"/></svg>
<svg class="ico" style="left:1px;top:227px" width="35" height="35" viewBox="0 0 35 35" ><path d="M13,11.5 A4.6,4.6 0 0 0 13,20.6 L27.5,20.6" stroke="#2a2a2a" fill="none" stroke-width="1.2"/></svg>
<svg class="ico" style="left:26px;top:253px" width="6" height="6" viewBox="0 0 6 6" ><path d="M5,0 L5,5 L0,5 Z" fill="#000"/></svg>
<svg class="ico" style="left:36px;top:227px" width="35" height="35" viewBox="0 0 35 35" ><path d="M4.2,11 L7.5,5 L14.5,5 L18,11 L14.5,17.2 L7.5,17.2 Z M25,8.8 L30,18.4 L19.8,18.4 Z" stroke="#2a2a2a" fill="none" stroke-width="1.2"/><rect x="5.2" y="21.3" width="14" height="7.2" rx="0.5" stroke="#2a2a2a" fill="none" stroke-width="1.2"/></svg>
<svg class="ico" style="left:62px;top:253px" width="6" height="6" viewBox="0 0 6 6" ><path d="M5,0 L5,5 L0,5 Z" fill="#000"/></svg>
<svg class="ico" style="left:1px;top:262px" width="35" height="35" viewBox="0 0 35 35" ><defs><pattern id="hp" width="3" height="3" patternUnits="userSpaceOnUse" patternTransform="rotate(45)"><rect width="1" height="3" fill="#555"/></pattern></defs><path d="M6.7,16 L12.5,10.4 L27.4,10.4 L27.4,24 L6.7,24 Z" fill="url(#hp)" stroke="#222" stroke-width="1.3"/><circle cx="19.5" cy="17.4" r="3.2" fill="#f2f2f2" stroke="#222" stroke-width="1.1"/></svg>
<svg class="ico" style="left:26px;top:288px" width="6" height="6" viewBox="0 0 6 6" ><path d="M5,0 L5,5 L0,5 Z" fill="#000"/></svg>
<svg class="ico" style="left:1px;top:305px" width="35" height="35" viewBox="0 0 35 35" ><text x="17.3" y="26.6" text-anchor="middle" font-family="Liberation Serif" font-size="27" fill="#111">A</text></svg>
<svg class="ico" style="left:36px;top:305px" width="35" height="35" viewBox="0 0 35 35" ><path d="M7.4,9 L7.4,24.5 M25.6,9 L25.6,24.5 M7.4,11.2 L25.6,11.2" stroke="#222" stroke-width="1.2"/><path d="M7.6,11.2 L11.5,9.3 L11.5,13.1 Z M25.4,11.2 L21.5,9.3 L21.5,13.1 Z" fill="#222"/></svg>
<svg class="ico" style="left:62px;top:331px" width="6" height="6" viewBox="0 0 6 6" ><path d="M5,0 L5,5 L0,5 Z" fill="#000"/></svg>
<svg class="ico" style="left:1px;top:340px" width="35" height="35" viewBox="0 0 35 35" ><rect x="6" y="8.3" width="22" height="17" fill="#fff" stroke="#222" stroke-width="1.2"/><path d="M9,22.6 L9,18 L12.5,14.7 L16,17.6 L20,12.8 L25.2,18.5 L25.2,22.6 Z" fill="#000"/><circle cx="23.6" cy="12.6" r="1.6" fill="#000"/></svg>
<svg class="ico" style="left:1px;top:383px" width="35" height="35" viewBox="0 0 35 35" ><path d="M4.2,10 L4.2,29.4 L23.6,29.4 Z" fill="#fff" stroke="#111" stroke-width="1.2"/><path d="M8.8,19.2 L8.8,25.5 L14.8,25.5 Z" fill="none" stroke="#111" stroke-width="1.1"/><path d="M9.4,6 L11,4.6 L19.2,12.6 L20,15.4 L17.4,14.6 Z" fill="#d82020" stroke="#801010" stroke-width="0.6"/><path d="M25.4,4.5 L22.8,22 M25.4,4.5 L28.4,22 M23.8,14 L27.3,14" stroke="#111" stroke-width="1.1" fill="none"/><circle cx="25.4" cy="5.5" r="1.2" fill="#111"/></svg>
<svg class="ico" style="left:26px;top:408px" width="6" height="6" viewBox="0 0 6 6" ><path d="M5,0 L5,5 L0,5 Z" fill="#000"/></svg>
<svg class="ico" style="left:36px;top:383px" width="35" height="35" viewBox="0 0 35 35" ><rect x="5.2" y="12.3" width="23.5" height="8.7" rx="1.2" fill="#fafafa" stroke="#333" stroke-width="1"/><path d="M8,12.5 L8,15.5 M10.3,12.5 L10.3,14.3 M12.6,12.5 L12.6,15.5 M14.9,12.5 L14.9,14.3 M17.2,12.5 L17.2,16.5 M19.5,12.5 L19.5,14.3 M21.8,12.5 L21.8,15.5 M24.1,12.5 L24.1,14.3 M26.3,12.5 L26.3,15.5" stroke="#333" stroke-width="0.8"/></svg>
<svg class="ico" style="left:1px;top:418px" width="35" height="35" viewBox="0 0 35 35" ><rect x="6.5" y="6.7" width="17" height="12.3" fill="#f2eedc" stroke="#9a9a9a" stroke-width="1"/><circle cx="21.4" cy="19" r="6.8" fill="#f0ead0" fill-opacity="0.85" stroke="#9a9a9a" stroke-width="1"/><circle cx="7" cy="19.8" r="1.3" fill="#f06070"/></svg>
<svg class="ico" style="left:36px;top:418px" width="35" height="35" viewBox="0 0 35 35" ><path d="M5.9,15.6 L23.2,6" stroke="#ff2020" stroke-width="1.3"/><path d="M15.3,11.3 L15.3,22.8 L18,20.3 L20.3,25.3 L22,24.5 L19.8,19.7 L23.4,19.4 Z" fill="#fff" stroke="#555" stroke-width="0.9" stroke-linejoin="round"/></svg>
<svg class="ico" style="left:62px;top:444px" width="6" height="6" viewBox="0 0 6 6" ><path d="M5,0 L5,5 L0,5 Z" fill="#000"/></svg>
<svg class="ico" style="left:1px;top:461px" width="35" height="35" viewBox="0 0 35 35" ><path d="M6.2,12.8 L19,6 L28,11.5 L28,22 L15.2,28.4 L6.2,23 Z M6.2,12.8 L15.2,18 L28,11.5 M15.2,18 L15.2,28.4" fill="none" stroke="#222" stroke-width="1.2" stroke-linejoin="round"/></svg>
<svg class="ico" style="left:26px;top:487px" width="6" height="6" viewBox="0 0 6 6" ><path d="M5,0 L5,5 L0,5 Z" fill="#000"/></svg>
<svg class="ico" style="left:95px;top:111px" width="15" height="15" viewBox="0 0 15 15" ><circle cx="7" cy="7.5" r="6" fill="#e8ecf4" stroke="#2a3a8a" stroke-width="1.8"/><path d="M4,5 L7.5,8 M5,9 L9,5" stroke="#c06060" stroke-width="0.6"/><path d="M7,7 L12.5,12.5" stroke="#f0a020" stroke-width="2"/><circle cx="12.5" cy="12.5" r="1" fill="#e05050"/></svg>
<svg class="ico" style="left:1157px;top:111px" width="15" height="15" viewBox="0 0 15 15" ><circle cx="7" cy="7" r="6.8" fill="#6e6e6e"/><path d="M4.3,4.3 L9.7,9.7 M9.7,4.3 L4.3,9.7" stroke="#fff" stroke-width="1.6"/></svg>
<svg class="ico" style="left:1175px;top:111px" width="15" height="15" viewBox="0 0 15 15" ><circle cx="7" cy="7" r="6.8" fill="#6e6e6e"/><rect x="5.3" y="3.8" width="5" height="4" fill="none" stroke="#fff" stroke-width="1"/><rect x="3.7" y="6" width="5" height="4" fill="#6e6e6e" stroke="#fff" stroke-width="1"/></svg>
<svg class="ico" style="left:1177px;top:136px" width="16" height="14" viewBox="0 0 16 14" ><path d="M0.5,6.8 Q8,-2.6 15.5,6.8 Q8,16.2 0.5,6.8 Z" fill="#000"/><circle cx="8" cy="7" r="3.6" fill="#fff"/><circle cx="8" cy="7.1" r="2.3" fill="#000"/><path d="M8.2,5.2 A1.8,1.8 0 0 1 9.9,6.9" stroke="#fff" stroke-width="0.9" fill="none"/></svg>
<svg class="ico" style="left:1237px;top:136px" width="16" height="14" viewBox="0 0 16 14" ><path d="M0.5,6.8 Q8,-2.6 15.5,6.8 Q8,16.2 0.5,6.8 Z" fill="#a8a8a8"/><circle cx="8" cy="7" r="3.6" fill="#fff"/><circle cx="8" cy="7.1" r="2.3" fill="#a8a8a8"/><path d="M8.2,5.2 A1.8,1.8 0 0 1 9.9,6.9" stroke="#fff" stroke-width="0.9" fill="none"/></svg>
<svg class="ico" style="left:1297px;top:135px" width="16" height="16" viewBox="0 0 16 16" ><path d="M8,1.8 L8,14.2 M1.8,8 L14.2,8" stroke="#700000" stroke-width="3.6"/><path d="M8,2.3 L8,13.7 M2.3,8 L13.7,8" stroke="#ff0000" stroke-width="2.2"/></svg>
<svg class="ico" style="left:1357px;top:135px" width="16" height="16" viewBox="0 0 16 16" ><path d="M2,8 L14,8" stroke="#700000" stroke-width="3.6"/><path d="M2.5,8 L13.5,8" stroke="#ff0000" stroke-width="2.2"/></svg>
<svg class="ico" style="left:1417px;top:134px" width="16" height="16" viewBox="0 0 16 16" ><path d="M1,15 L2,11.5 L12,1.5 Q13.5,0.8 14.5,1.8 Q15.3,3 14.3,4 L4.3,14 Z" fill="#e8a830" stroke="#a86818" stroke-width="0.7"/><path d="M12,1.5 Q13.5,0.8 14.5,1.8 Q15.3,3 14.3,4 L13.2,5.1 L10.9,2.6 Z" fill="#e02020"/><path d="M1,15 L2,11.5 L4.3,14 Z" fill="#f0d8a8"/><path d="M1,15 L1.5,13.2 L2.8,14.5 Z" fill="#333"/></svg>
<svg class="ico" style="left:1414px;top:160px" width="16" height="14" viewBox="0 0 16 14" ><path d="M0.5,6.8 Q8,-2.6 15.5,6.8 Q8,16.2 0.5,6.8 Z" fill="#000"/><circle cx="8" cy="7" r="3.6" fill="#fff"/><circle cx="8" cy="7.1" r="2.3" fill="#000"/><path d="M8.2,5.2 A1.8,1.8 0 0 1 9.9,6.9" stroke="#fff" stroke-width="0.9" fill="none"/></svg>
<svg class="ico" style="left:1439px;top:160px" width="12" height="16" viewBox="0 0 12 16" ><path d="M2.8,7 L2.8,4.8 A3.2,3.2 0 0 1 9.2,4.8 L9.2,7" fill="none" stroke="#b4b4b4" stroke-width="1.6"/><rect x="1" y="7" width="10" height="7.5" rx="0.6" fill="#b4b4b4"/></svg>
<svg class="ico" style="left:1414px;top:180px" width="16" height="14" viewBox="0 0 16 14" ><path d="M0.5,6.8 Q8,-2.6 15.5,6.8 Q8,16.2 0.5,6.8 Z" fill="#a8a8a8"/><circle cx="8" cy="7" r="3.6" fill="#fff"/><circle cx="8" cy="7.1" r="2.3" fill="#a8a8a8"/><path d="M8.2,5.2 A1.8,1.8 0 0 1 9.9,6.9" stroke="#fff" stroke-width="0.9" fill="none"/></svg>
<svg class="ico" style="left:1439px;top:180px" width="12" height="16" viewBox="0 0 12 16" ><path d="M2.8,7 L2.8,4.8 A3.2,3.2 0 0 1 9.2,4.8 L9.2,7" fill="none" stroke="#b4b4b4" stroke-width="1.6"/><rect x="1" y="7" width="10" height="7.5" rx="0.6" fill="#b4b4b4"/></svg>
<svg class="ico" style="left:1414px;top:200px" width="16" height="14" viewBox="0 0 16 14" ><path d="M0.5,6.8 Q8,-2.6 15.5,6.8 Q8,16.2 0.5,6.8 Z" fill="#000"/><circle cx="8" cy="7" r="3.6" fill="#0a4bd6"/><circle cx="8" cy="7.1" r="2.3" fill="#000"/><path d="M8.2,5.2 A1.8,1.8 0 0 1 9.9,6.9" stroke="#0a4bd6" stroke-width="0.9" fill="none"/></svg>
<svg class="ico" style="left:1439px;top:200px" width="12" height="16" viewBox="0 0 12 16" ><path d="M2.8,7 L2.8,4.8 A3.2,3.2 0 0 1 9.2,4.8 L9.2,7" fill="none" stroke="#b4b4b4" stroke-width="1.6"/><rect x="1" y="7" width="10" height="7.5" rx="0.6" fill="#b4b4b4"/></svg>
<svg class="ico" style="left:1392px;top:198px" width="16" height="16" viewBox="0 0 16 16" ><path d="M1,15 L2,11.5 L12,1.5 Q13.5,0.8 14.5,1.8 Q15.3,3 14.3,4 L4.3,14 Z" fill="#e8a830" stroke="#a86818" stroke-width="0.7"/><path d="M12,1.5 Q13.5,0.8 14.5,1.8 Q15.3,3 14.3,4 L13.2,5.1 L10.9,2.6 Z" fill="#e02020"/><path d="M1,15 L2,11.5 L4.3,14 Z" fill="#f0d8a8"/><path d="M1,15 L1.5,13.2 L2.8,14.5 Z" fill="#333"/></svg>
<div class="abs" style="left:1390px;top:146px;width:78px;height:78px;border-radius:50%;border:4px solid rgba(150,175,205,0.5);box-shadow:0 0 1.5px 1px rgba(160,185,210,0.4),inset 0 0 3px 1.5px rgba(160,185,210,0.45);background:rgba(255,255,255,0.22)"></div>
<svg class="ico" style="left:1427px;top:183px" width="20" height="30" viewBox="0 0 20 30" ><path d="M1.5,1.5 L1.5,22.5 L6.3,18 L10,26.5 L13.8,25 L10.3,16.5 L17,16 Z" fill="#fff" stroke="#000" stroke-width="1.5" stroke-linejoin="round"/></svg>
<svg class="ico" style="left:1462px;top:126px" width="30" height="30" viewBox="0 0 30 30" ><rect x="1.5" y="1.5" width="27" height="27" fill="#fff" stroke="#222" stroke-width="1"/><rect x="1" y="1" width="28" height="4.5" fill="#000"/><rect x="2.2" y="1.8" width="3" height="3" fill="#fff"/><path d="M9,12 L14,10 L14,22 L9,24 Z" fill="#9a9a9a" stroke="#555" stroke-width="0.6"/><path d="M12,11 L17,9 L17,21 L12,23 Z" fill="#c8c8c8" stroke="#555" stroke-width="0.6"/><path d="M15,10 L22,7.5 L22,19.5 L15,22 Z" fill="#fff" stroke="#555" stroke-width="0.7"/><path d="M16.5,19 L19.5,12 L20.5,18 Z" fill="none" stroke="#e03030" stroke-width="0.8"/></svg>
<svg class="ico" style="left:1462px;top:173px" width="30" height="30" viewBox="0 0 30 30" ><rect x="1.5" y="1.5" width="27" height="27" fill="#fff" stroke="#222" stroke-width="1"/><rect x="1" y="1" width="28" height="4.5" fill="#000"/><rect x="2.2" y="1.8" width="3" height="3" fill="#fff"/><rect x="8.2" y="11" width="10.4" height="7" fill="#f4ecc0" stroke="#888" stroke-width="0.8"/><circle cx="17" cy="17.4" r="4.5" fill="#f4ecc0" fill-opacity="0.85" stroke="#888" stroke-width="0.8"/></svg>
<svg class="ico" style="left:1462px;top:219px" width="30" height="30" viewBox="0 0 30 30" ><rect x="1.5" y="1.5" width="27" height="27" fill="#fff" stroke="#222" stroke-width="1"/><rect x="1" y="1" width="28" height="4.5" fill="#000"/><rect x="2.2" y="1.8" width="3" height="3" fill="#fff"/><rect x="6.5" y="9.5" width="17" height="12" rx="2.5" fill="#f6f6f2" stroke="#b8cce8" stroke-width="1"/></svg>
<svg class="ico" style="left:1462px;top:275px" width="30" height="30" viewBox="0 0 30 30" ><rect x="1.5" y="1.5" width="27" height="27" fill="#fff" stroke="#222" stroke-width="1"/><rect x="1" y="1" width="28" height="4.5" fill="#000"/><rect x="2.2" y="1.8" width="3" height="3" fill="#fff"/><rect x="5" y="9" width="4" height="3" fill="#000"/><rect x="11" y="9" width="13" height="3" fill="none" stroke="#222" stroke-width="0.8"/><rect x="5" y="14.5" width="4" height="3" fill="#000"/><rect x="11" y="14.5" width="13" height="3" fill="none" stroke="#222" stroke-width="0.8"/><rect x="5" y="20" width="4" height="3" fill="#000"/><rect x="11" y="20" width="13" height="3" fill="none" stroke="#222" stroke-width="0.8"/></svg>
<svg class="ico" style="left:1462px;top:321px" width="30" height="30" viewBox="0 0 30 30" ><rect x="1.5" y="1.5" width="27" height="27" fill="#fff" stroke="#222" stroke-width="1"/><rect x="1" y="1" width="28" height="4.5" fill="#000"/><rect x="2.2" y="1.8" width="3" height="3" fill="#fff"/><path d="M7,11 Q15,8 23,11 L17,17 L17,24 L13,22.5 L13,17 Z" fill="#a8a8a8" stroke="#666" stroke-width="0.7"/><ellipse cx="15" cy="10.8" rx="8" ry="1.8" fill="#d0d0d0" stroke="#777" stroke-width="0.6"/></svg>
<svg class="ico" style="left:1462px;top:367px" width="30" height="30" viewBox="0 0 30 30" ><rect x="1.5" y="1.5" width="27" height="27" fill="#fff" stroke="#222" stroke-width="1"/><rect x="1" y="1" width="28" height="4.5" fill="#000"/><rect x="2.2" y="1.8" width="3" height="3" fill="#fff"/><path d="M7,10 L11,14 L11,20 L7,24 Z" fill="#e8e8e8" stroke="#555" stroke-width="0.7"/><rect x="11" y="13" width="11" height="8" rx="1" fill="#b0b0b0" stroke="#555" stroke-width="0.7"/><path d="M4,17 L26,17" stroke="#f07080" stroke-width="0.7" stroke-dasharray="1.5 1"/></svg>
<svg class="ico" style="left:1462px;top:423px" width="30" height="30" viewBox="0 0 30 30" ><rect x="1.5" y="1.5" width="27" height="27" fill="#fff" stroke="#222" stroke-width="1"/><rect x="1" y="1" width="28" height="4.5" fill="#000"/><rect x="2.2" y="1.8" width="3" height="3" fill="#fff"/><g font-family="Liberation Sans" font-size="3.2" fill="#444"><text x="4" y="10">Comment: abc</text><text x="4" y="14">Command: line</text><text x="4" y="18">Coordinate: 10,0</text><text x="4" y="22">Coordinate: 10,10</text></g><path d="M2,24 L28,24" stroke="#222" stroke-width="0.6"/><text x="4" y="28" font-family="Liberation Sans" font-size="3.3" fill="#222">C ... command</text></svg>
<svg class="ico" style="left:1462px;top:470px" width="30" height="30" viewBox="0 0 30 30" ><rect x="1.5" y="1.5" width="27" height="27" fill="#fff" stroke="#222" stroke-width="1"/><rect x="1" y="1" width="28" height="4.5" fill="#000"/><rect x="2.2" y="1.8" width="3" height="3" fill="#fff"/><rect x="9" y="9" width="12" height="15" rx="1" fill="#c8841c"/><rect x="10.5" y="10.5" width="9" height="12" fill="#fafafa"/><rect x="12" y="7.5" width="6" height="3" rx="0.8" fill="#8a8a84"/><path d="M12,13.5 L18,13.5 M12,15.5 L18,15.5 M12,17.5 L17,17.5" stroke="#ccc" stroke-width="0.8"/><path d="M16,22.5 L19.5,19 L19.5,22.5 Z" fill="#999"/></svg>
<svg class="ico" style="left:1462px;top:530px" width="32" height="24" viewBox="0 0 32 24" ><path d="M3,3.4 L9,3.4 A3.9,3.9 0 0 1 9,11.2 L5.2,11.2 M9,11.2 A4.1,4.1 0 0 1 9,19.4 L3,19.4 M16.3,2.6 L16.3,19.4 L21.4,19.4 Q27.6,19.4 27.6,12.5 L27.6,9.5 Q27.6,2.6 21.4,2.6 Z" fill="none" stroke="#111" stroke-width="1.45"/></svg>
<svg class="ico" style="left:1133px;top:778px" width="16" height="14" viewBox="0 0 16 14" ><rect x="0.6" y="1" width="14" height="11" fill="#f2f2f2" stroke="#222" stroke-width="1"/><rect x="0.6" y="1" width="14" height="2.5" fill="#222"/><rect x="11" y="1.6" width="1.5" height="1.2" fill="#fff"/></svg>
<svg class="ico" style="left:716px;top:805px" width="20" height="32" viewBox="0 0 20 32" ><path d="M10,1 C15,1 18.5,5 18.5,10 L18.5,22 C18.5,27 15,30.5 10,30.5 C5,30.5 1.5,27 1.5,22 L1.5,10 C1.5,5 5,1 10,1 Z" fill="#fff" stroke="#3a3a3a" stroke-width="0.9"/><path d="M1.5,15 Q10,12.3 18.5,15" fill="none" stroke="#333" stroke-width="1.3"/><path d="M10,1 L10,13.5" stroke="#333" stroke-width="1"/><rect x="8.2" y="2.9" width="3.6" height="7.6" rx="1.6" fill="#fff" stroke="#333" stroke-width="0.9"/></svg>
</body></html>
